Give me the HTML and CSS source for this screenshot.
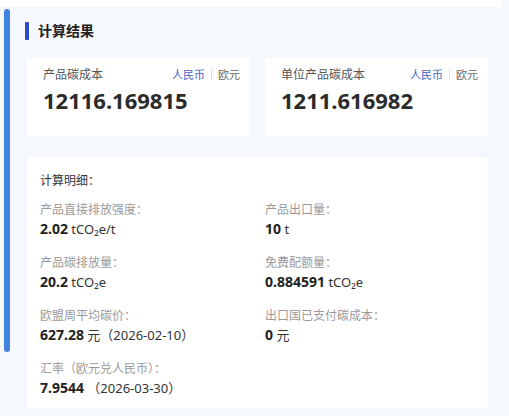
FILE: index.html
```html
<!DOCTYPE html>
<html lang="zh-CN">
<head>
<meta charset="utf-8">
<title>计算结果</title>
<link rel="stylesheet" href="styles.css">
</head>
<body>
<div class="top-strip"></div>
<div class="scrollbar"></div>
<section class="panel">
  <h2 class="title"><span class="title-bar"></span>计算结果</h2>
  <div class="summary">
    <div class="card">
      <div class="card-head">
        <span class="card-label">产品碳成本</span>
        <span class="switch"><span class="on">人民币</span><i class="sep"></i><span class="off">欧元</span></span>
      </div>
      <div class="card-value">12116.169815</div>
    </div>
    <div class="card">
      <div class="card-head">
        <span class="card-label">单位产品碳成本</span>
        <span class="switch"><span class="on">人民币</span><i class="sep"></i><span class="off">欧元</span></span>
      </div>
      <div class="card-value">1211.616982</div>
    </div>
  </div>
  <div class="detail">
    <div class="detail-title">计算明细：</div>
    <div class="grid">
      <div class="item">
        <div class="label">产品直接排放强度：</div>
        <div class="value"><b>2.02</b> tCO₂e/t</div>
      </div>
      <div class="item">
        <div class="label">产品出口量：</div>
        <div class="value"><b>10</b> t</div>
      </div>
      <div class="item">
        <div class="label">产品碳排放量：</div>
        <div class="value"><b>20.2</b> tCO₂e</div>
      </div>
      <div class="item">
        <div class="label">免费配额量：</div>
        <div class="value"><b>0.884591</b> tCO₂e</div>
      </div>
      <div class="item">
        <div class="label">欧盟周平均碳价：</div>
        <div class="value"><b>627.28</b> 元（2026-02-10）</div>
      </div>
      <div class="item">
        <div class="label">出口国已支付碳成本：</div>
        <div class="value"><b>0</b> 元</div>
      </div>
      <div class="item">
        <div class="label">汇率（欧元兑人民币）：</div>
        <div class="value"><b>7.9544</b> （2026-03-30）</div>
      </div>
    </div>
  </div>
</section>
</body>
</html>
```

FILE: styles.css
```css
* { box-sizing: border-box; }
html, body {
  margin: 0;
  padding: 0;
}
body {
  background: #f5f8fc;
  font-family: "Noto Sans", "Noto Sans CJK SC", sans-serif;
  color: #333;
  width: 509px;
  height: 416px;
  overflow: hidden;
  position: relative;
}
.top-strip {
  width: 502px;
  height: 7px;
  background: #ffffff;
}
.scrollbar {
  position: absolute;
  left: 4px;
  top: 9px;
  width: 6px;
  height: 343px;
  border-radius: 3px;
  background: #4282e0;
}
.panel {
  padding: 15px 0 0 27px;
}
.title {
  margin: 0 0 18px -2px;
  height: 18px;
  line-height: 18px;
  font-size: 14px;
  font-weight: 700;
  color: #222;
  display: flex;
  align-items: center;
  gap: 9px;
}
.title-bar {
  width: 4px;
  height: 18px;
  background: #2d4bc8;
  border-radius: 1px;
}
.summary {
  display: flex;
  gap: 15px;
  margin-bottom: 21px;
}
.card {
  width: 223px;
  height: 78px;
  background: #fff;
  padding: 6px 10px 0 16px;
}
.card-head {
  display: flex;
  justify-content: space-between;
  align-items: center;
  height: 20px;
}
.card-label {
  font-size: 12px;
  color: #555;
}
.switch {
  display: flex;
  align-items: center;
  font-size: 11px;
}
.switch .on { color: #4565c2; }
.switch .off { color: #666; }
.sep {
  width: 1px;
  height: 11px;
  background: #dcdfe6;
  margin: 0 6px;
}
.card-value {
  margin-top: 1px;
  height: 30px;
  line-height: 30px;
  font-size: 22px;
  font-weight: 700;
  color: #2b2b2b;
}
.detail {
  width: 461px;
  height: 251px;
  background: #fff;
  padding: 14px 13px;
}
.detail-title {
  font-size: 12px;
  line-height: 20px;
  color: #333;
  margin-bottom: 10px;
}
.grid {
  display: grid;
  grid-template-columns: 225px 225px;
  row-gap: 15px;
}
.label {
  font-size: 12px;
  line-height: 18px;
  color: #9a9a9a;
}
.value {
  font-size: 13px;
  line-height: 20px;
  color: #333;
}
.value b {
  font-size: 14px;
  font-weight: 700;
  color: #222;
}
```
